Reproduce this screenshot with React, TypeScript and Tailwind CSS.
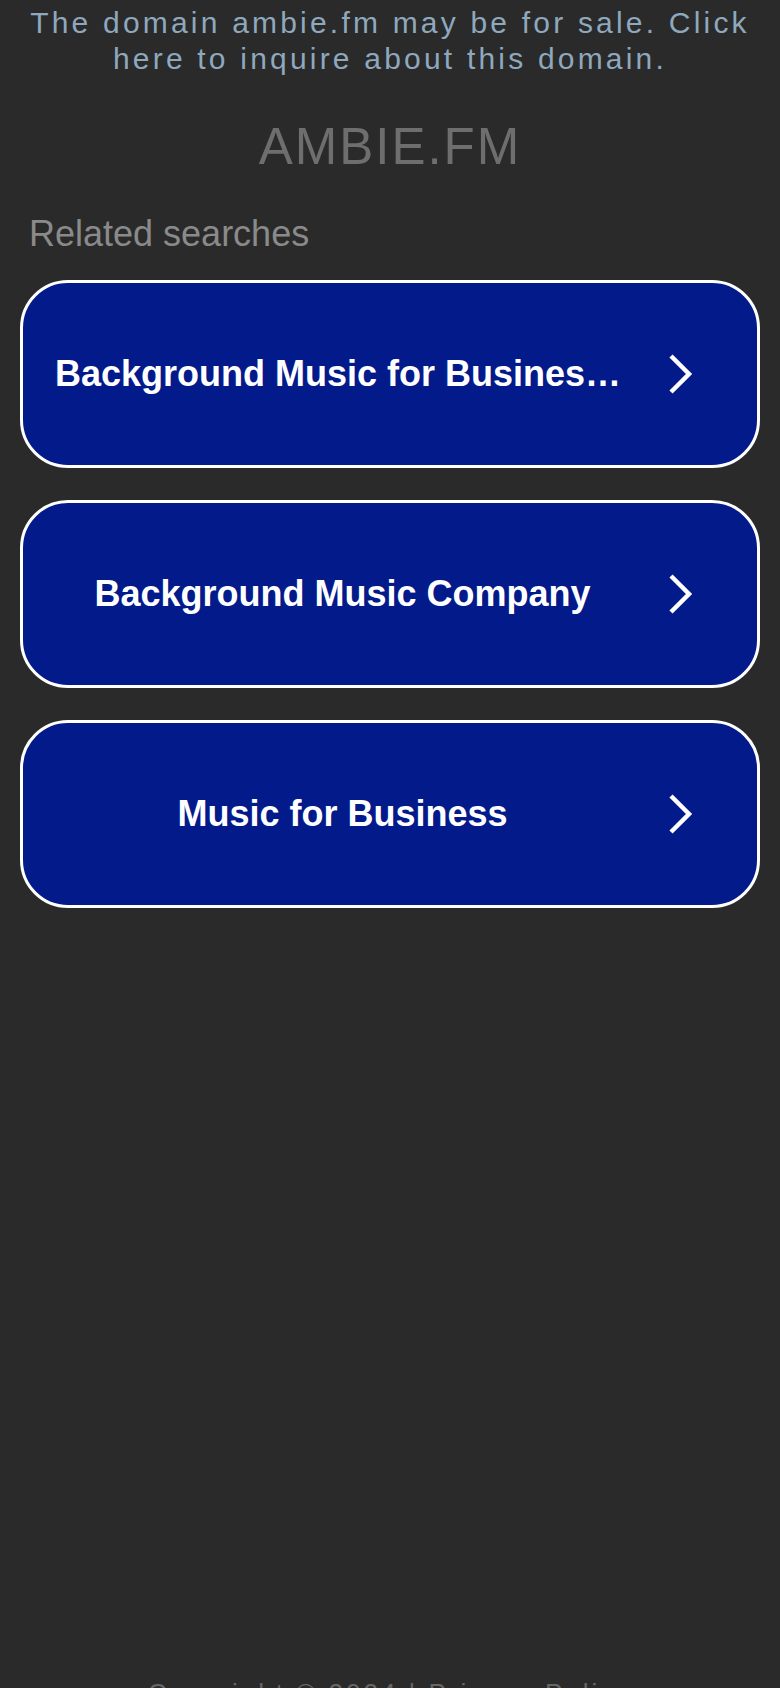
import React from 'react';

const searches = [
  'Background Music for Business Owners',
  'Background Music Company',
  'Music for Business',
];

const Chevron = () => (
  <svg width="28" height="42" viewBox="0 0 28 42" fill="none">
    <path d="M5 3 L23 21 L5 39" stroke="white" strokeWidth="4.5" strokeLinecap="butt" strokeLinejoin="miter" />
  </svg>
);

export default function App() {
  return (
    <div className="min-h-screen bg-[#2a2a2a] font-['Liberation_Sans',Arial,sans-serif] overflow-hidden">
      {/* sale notice */}
      <div className="pt-[5px] px-4 text-center text-[30px] leading-[36px] tracking-[3.2px] text-[#8ea8bd]">
        The domain ambie.fm may be for sale. Click here to inquire about this domain.
      </div>

      {/* domain title */}
      <h1 className="mt-[40px] text-center text-[51px] leading-[60px] tracking-[2px] text-[#6e6e6e] font-normal">
        AMBIE.FM
      </h1>

      <div className="mt-[36px] px-5">
        <div className="pl-[9px] text-[36px] leading-[42px] text-[#8a8a8a]">Related searches</div>

        <div className="mt-[25px] flex flex-col gap-[32px]">
          {searches.map(s => (
            <a
              key={s}
              href="#"
              className="flex items-center h-[188px] rounded-[48px] border-[3px] border-white bg-[#031a8a] pl-[32px] pr-[37px]"
            >
              <span className="flex-1 min-w-0 truncate text-center text-white font-bold text-[36px] leading-[44px]">
                {s}
              </span>
              <span className="ml-[10px] w-[80px] flex justify-center">
                <Chevron />
              </span>
            </a>
          ))}
        </div>
      </div>

      {/* footer */}
      <div className="mt-[770px] text-center text-[26px] leading-[30px] tracking-[3px] text-[#666]">
        Copyright © 2024 | Privacy Policy
      </div>
    </div>
  );
}
